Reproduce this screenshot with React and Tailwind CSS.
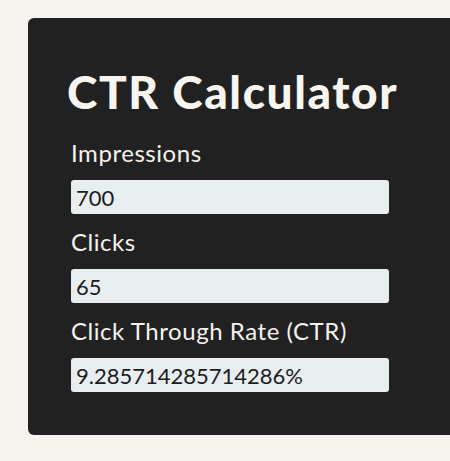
import { useState } from "react";

function Field({ label, value, onChange, readOnly }) {
  return (
    <div className="flex flex-col">
      <label className="text-[24px] leading-[22px] tracking-[0.55px] text-[#f5f1ed]">{label}</label>
      <input
        type="text"
        value={value}
        onChange={onChange}
        readOnly={readOnly}
        className="mt-4 h-[34px] w-[318px] rounded-[3px] bg-[#e8edf0] px-[5px] text-[22px] text-[#1c1c1c] outline-none"
      />
    </div>
  );
}

export default function App() {
  const [impressions, setImpressions] = useState("700");
  const [clicks, setClicks] = useState("65");

  const ctr = (Number(clicks) / Number(impressions)) * 100 + "%";

  return (
    <div className="h-[461px] w-[450px] overflow-hidden bg-[#f6f3ef] pt-[18px] font-['Lato',sans-serif]">
      <div className="ml-[28px] w-[440px] rounded-[6px] bg-[#212121] pb-[43px] pl-[43px] pt-[51px]">
        <h1 className="-ml-[4px] text-[46px] font-black leading-[46px] tracking-[1.6px] text-[#f8f4f0]">
          CTR Calculator
        </h1>

        <div className="mt-[27px] flex flex-col gap-[17px]">
          <Field
            label="Impressions"
            value={impressions}
            onChange={(e) => setImpressions(e.target.value)}
          />
          <Field
            label="Clicks"
            value={clicks}
            onChange={(e) => setClicks(e.target.value)}
          />
          <Field label="Click Through Rate (CTR)" value={ctr} readOnly />
        </div>
      </div>
    </div>
  );
}
